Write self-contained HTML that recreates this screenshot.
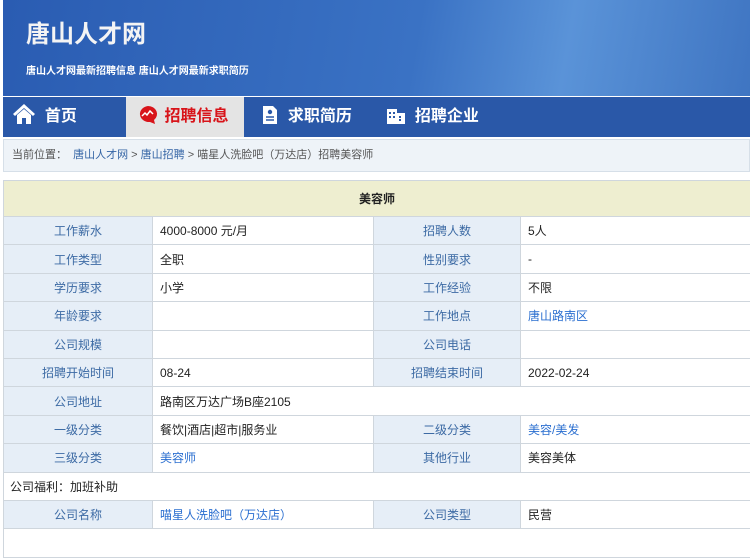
<!DOCTYPE html>
<html><head><meta charset="utf-8"><style>
*{margin:0;padding:0;box-sizing:border-box}
body{width:750px;height:533px;overflow:hidden;background:#fff;font-family:"Liberation Sans","Noto Sans CJK SC",sans-serif;font-size:12px;color:#222}
.hd{position:absolute;left:3px;top:0;width:747px;height:96px;background:linear-gradient(100deg,#2a5cb2 0%,#3a72c4 55%,#5a93d8 75%,#3f75c2 100%)}
.hd h1{position:absolute;left:23px;top:14px;font-size:24px;color:#f4f4f4;font-weight:bold;letter-spacing:0}
.hd p{position:absolute;left:23px;top:62px;font-size:10px;color:#fff;font-weight:bold}
.nav{position:absolute;left:3px;top:97px;width:747px;height:40px;background:#2a58a8}
.nav div{position:absolute;top:0;height:40px;line-height:40px;color:#fff;font-size:16px;font-weight:bold}
.nav .act{background:#e4e4e4;color:#d8141a;left:123px;width:118px}
.bc{position:absolute;left:3px;top:139px;width:747px;height:33px;background:#eef3f8;border:1px solid #d6dfe8;line-height:31px;padding-left:8px;font-size:11px;color:#555}
.bc a{color:#3565a5;text-decoration:none}
table{position:absolute;left:3px;top:180px;width:748px;border-collapse:collapse;font-size:12px}
td{border:1px solid #cfd6dd;height:28.4px;padding:0 7px}
.t td{background:#eeeed0;height:36px;text-align:center;font-weight:bold}
td.l{background:#e6eef7;color:#3c6aa4;text-align:center;width:149px}
td.l2{background:#e6eef7;color:#3c6aa4;text-align:center;width:147px}
.b{color:#2b6fd0}
</style></head><body>
<div class="hd"><h1>唐山人才网</h1><p>唐山人才网最新招聘信息 唐山人才网最新求职简历</p></div>
<div class="nav">
<div style="left:9px"><svg width="24" height="22" viewBox="0 0 24 22" style="vertical-align:-4px"><path d="M12 1L1 11l2 2 9-8 9 8 2-2z" fill="#fff"/><path d="M5 12l7-6 7 6v9h-5v-6h-4v6H5z" fill="#fff"/></svg>&nbsp;&nbsp;首页</div>
<div class="act"><span style="margin-left:12px"><svg width="22" height="20" viewBox="0 0 22 20" style="vertical-align:-4px"><path d="M10 1a9 8 0 1 0 2 16l5 2-1-4a9 8 0 0 0-6-14z" fill="#d8141a"/><path d="M4 11l3-3 2 2 3-4 3 3" stroke="#fff" stroke-width="1.5" fill="none"/></svg></span>&nbsp;招聘信息</div>
<div style="left:258px"><svg width="18" height="20" viewBox="0 0 18 20" style="vertical-align:-4px"><path d="M2 1h10l4 4v14H2z" fill="#fff"/><circle cx="9" cy="7" r="2.2" fill="#2a58a8"/><path d="M5 12h8M5 15h8" stroke="#2a58a8" stroke-width="1.6"/></svg>&nbsp;&nbsp;求职简历</div>
<div style="left:383px"><svg width="20" height="20" viewBox="0 0 20 20" style="vertical-align:-4px"><path d="M1 4h10v15H1zM11 8h8v11h-8z" fill="#fff"/><path d="M3 7h2v2H3zM7 7h2v2H7zM3 11h2v2H3zM7 11h2v2H7zM13 11h2v2h-2zM13 14h2v2h-2z" fill="#2a58a8"/></svg>&nbsp;&nbsp;招聘企业</div>
</div>
<div class="bc">当前位置：&nbsp; <a>唐山人才网</a> &gt; <a>唐山招聘</a> &gt; 喵星人洗脸吧（万达店）招聘美容师</div>
<table>
<tr class="t"><td colspan="4">美容师</td></tr>
<tr><td class="l">工作薪水</td><td>4000-8000 元/月</td><td class="l2">招聘人数</td><td>5人</td></tr>
<tr><td class="l">工作类型</td><td>全职</td><td class="l2">性别要求</td><td>-</td></tr>
<tr><td class="l">学历要求</td><td>小学</td><td class="l2">工作经验</td><td>不限</td></tr>
<tr><td class="l">年龄要求</td><td></td><td class="l2">工作地点</td><td class="b">唐山路南区</td></tr>
<tr><td class="l">公司规模</td><td></td><td class="l2">公司电话</td><td></td></tr>
<tr><td class="l">招聘开始时间</td><td>08-24</td><td class="l2">招聘结束时间</td><td>2022-02-24</td></tr>
<tr><td class="l">公司地址</td><td colspan="3">路南区万达广场B座2105</td></tr>
<tr><td class="l">一级分类</td><td style="width:221px">餐饮|酒店|超市|服务业</td><td class="l2">二级分类</td><td class="b">美容/美发</td></tr>
<tr><td class="l">三级分类</td><td class="b">美容师</td><td class="l2">其他行业</td><td>美容美体</td></tr>
<tr><td colspan="4" style="padding-left:6px">公司福利：加班补助</td></tr>
<tr><td class="l">公司名称</td><td class="b">喵星人洗脸吧（万达店）</td><td class="l2">公司类型</td><td>民营</td></tr>
<tr><td colspan="4"></td></tr>
</table>
</body></html>
